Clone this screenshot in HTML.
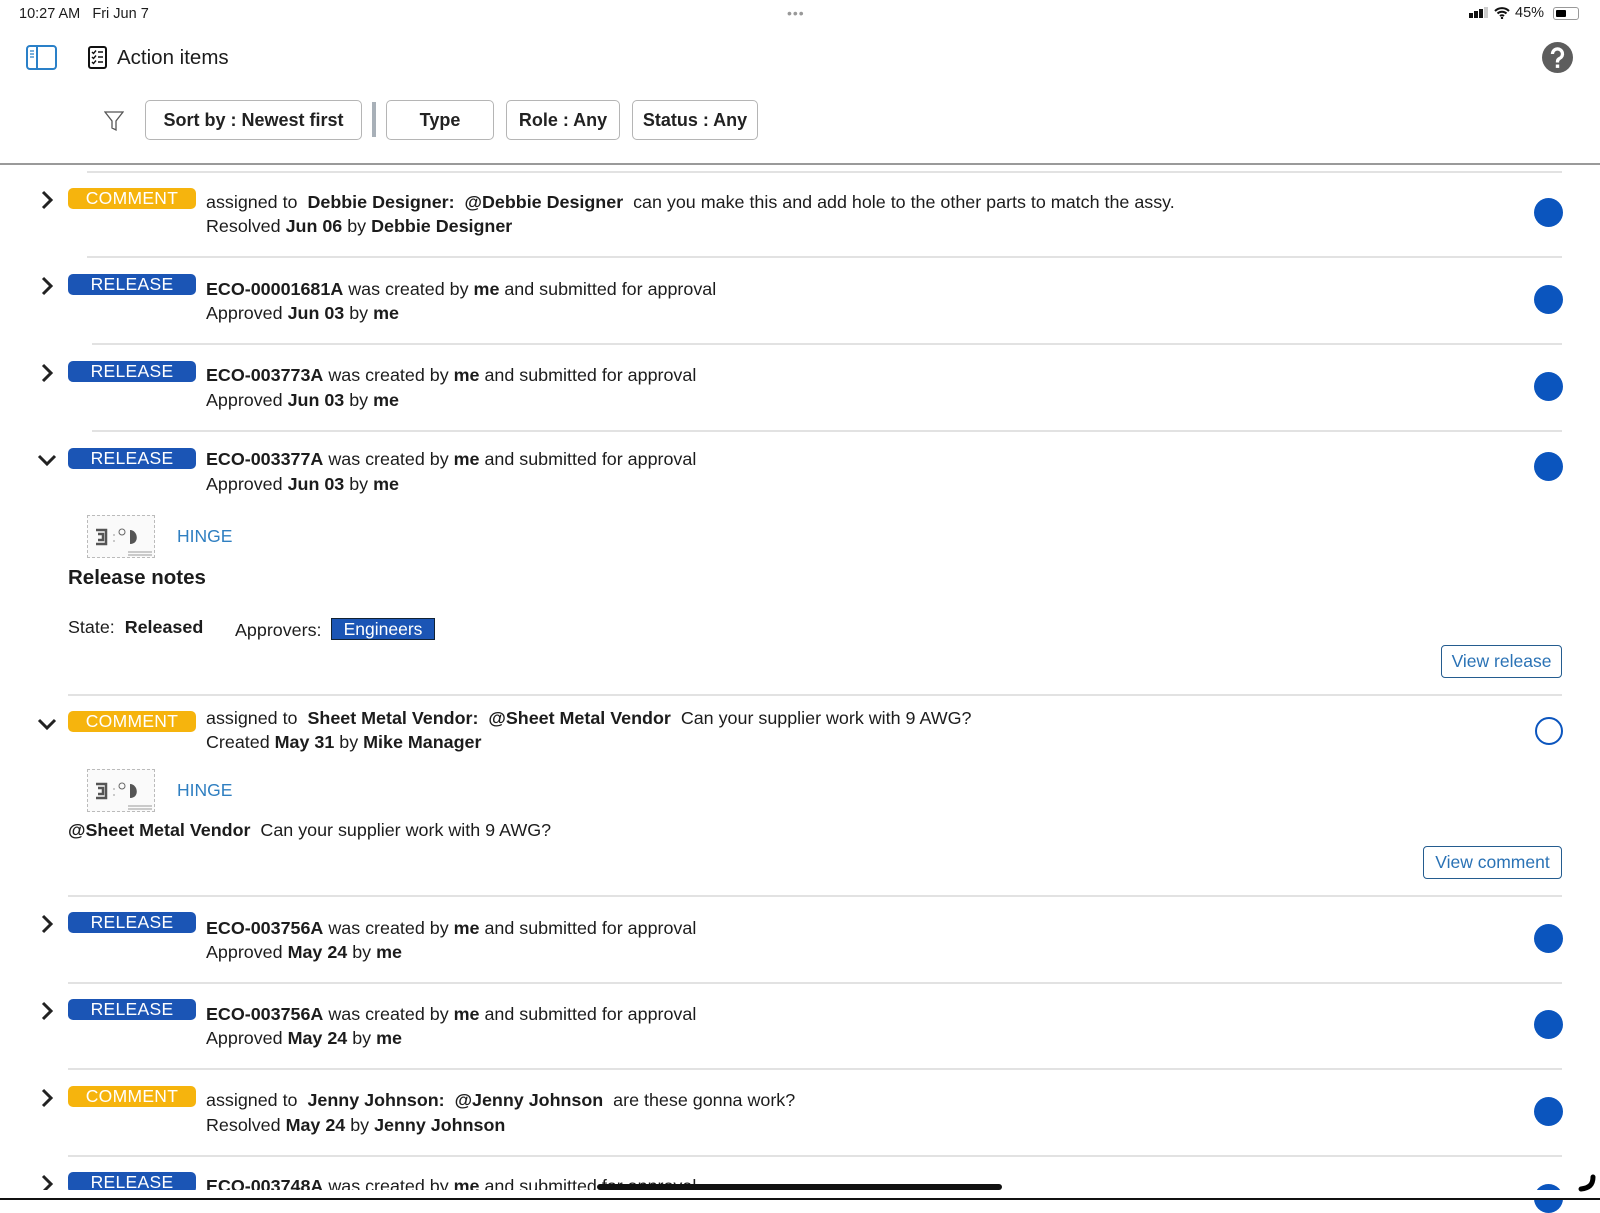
<!DOCTYPE html>
<html><head><meta charset="utf-8"><style>
*{margin:0;padding:0;box-sizing:border-box}
body{width:1600px;height:1200px;overflow:hidden;background:#fff;font-family:"Liberation Sans",sans-serif;color:#1c1c1c;position:relative}
.a{position:absolute;white-space:nowrap}
.t{font-size:17.9px;line-height:20px}
b{font-weight:bold}
.btn{position:absolute;top:100px;height:40px;border:1.5px solid #b5b5b5;border-radius:5px;font-size:18px;font-weight:bold;display:flex;align-items:center;justify-content:center;color:#222}
.sep{position:absolute;height:1.5px;background:#e2e2e2;right:38px}
.badge{position:absolute;left:68px;width:128px;height:21px;border-radius:5px;color:#fff;font-size:17.5px;line-height:21px;text-align:center;letter-spacing:.3px}
.c{background:#f6b40d}.r{background:#1b55b5}
.dot{position:absolute;left:1534px;width:29px;height:29px;border-radius:50%;background:#0b55be}
.chev{position:absolute;left:39px}
.thumb{position:absolute;left:87px;width:68px;height:43px;border:1px dashed #bbb;background:#fafafa}
.link{color:#2f7fc1;font-size:17.5px}
.vb{position:absolute;height:33px;border:1.5px solid #245c8f;border-radius:4px;color:#2a72b5;font-size:17.5px;display:flex;align-items:center;justify-content:center}
</style></head><body>
<div class="a" style="left:19px;top:6px;font-size:14.5px">10:27 AM&nbsp;&nbsp; Fri Jun 7</div>
<div class="a" style="left:787px;top:5px;font-size:14px;color:#999;letter-spacing:1px">•••</div>
<div class="a" style="left:1469px;top:6px;font-size:14.5px">
<span style="display:inline-block;width:4px;height:5px;background:#111;margin-right:1px"></span><span style="display:inline-block;width:4px;height:7px;background:#111;margin-right:1px"></span><span style="display:inline-block;width:4px;height:9px;background:#111;margin-right:1px"></span><span style="display:inline-block;width:4px;height:11px;background:#ccc;margin-right:5px"></span></div>
<svg class="a" style="left:1494px;top:7px" width="16" height="12" viewBox="0 0 16 12"><path d="M1 4a10 10 0 0 1 14 0M3.5 6.5a6.5 6.5 0 0 1 9 0M6 9a3 3 0 0 1 4 0" stroke="#111" stroke-width="2" fill="none"/><circle cx="8" cy="11" r="1.2" fill="#111"/></svg>
<div class="a" style="left:1515px;top:5px;font-size:14.5px">45%</div>
<div class="a" style="left:1553px;top:7px;width:26px;height:13px;border:1.5px solid #999;border-radius:3px"><div style="margin:1.5px;width:10px;height:7px;background:#000;border-radius:1px"></div></div>
<!-- header -->
<svg class="a" style="left:26px;top:45px" width="31" height="25" viewBox="0 0 31 25"><rect x="1" y="1" width="29" height="23" rx="3" fill="none" stroke="#2a80c8" stroke-width="2"/><line x1="11" y1="1" x2="11" y2="24" stroke="#2a80c8" stroke-width="2"/><path d="M4 6h4M4 9h4M4 12h4" stroke="#2a80c8" stroke-width="1.3"/></svg>
<svg class="a" style="left:88px;top:46px" width="19" height="23" viewBox="0 0 19 23"><rect x="1" y="1" width="17" height="21" rx="2" fill="none" stroke="#111" stroke-width="2"/><path d="M4 6l1.5 1.5 2.5-3M4 11l1.5 1.5 2.5-3M4 16l1.5 1.5 2.5-3M10 6h5M10 11h5M10 16h5" stroke="#111" stroke-width="1.4" fill="none"/></svg>
<div class="a" style="left:117px;top:46px;font-size:20.5px">Action items</div>
<svg class="a" style="left:1542px;top:42px" width="31" height="31" viewBox="0 0 31 31"><circle cx="15.5" cy="15.5" r="15.5" fill="#5d5d5d"/><path d="M10.5 12a5 5 0 1 1 7 4.5c-1.3.7-2 1.5-2 3v1" stroke="#fff" stroke-width="3.3" fill="none"/><rect x="13.8" y="22.5" width="3.4" height="3.4" fill="#fff"/></svg>
<svg class="a" style="left:104px;top:111px" width="20" height="21" viewBox="0 0 20 21"><path d="M1 1h18l-7 9v9l-4-2v-7z" fill="none" stroke="#555" stroke-width="1.3"/></svg>
<div class="btn" style="left:145px;width:217px">Sort by : Newest first</div>
<div class="a" style="left:372px;top:102px;width:4px;height:35px;background:#a8b0b8"></div>
<div class="btn" style="left:386px;width:108px">Type</div>
<div class="btn" style="left:506px;width:114px">Role : Any</div>
<div class="btn" style="left:632px;width:126px">Status : Any</div>
<div class="a" style="left:0;top:163px;width:1600px;height:1.5px;background:#9a9a9a"></div>
<div class="sep" style="left:87px;top:171px"></div>

<svg width="0" height="0" style="position:absolute"><defs>
<symbol id="cr" viewBox="0 0 16 22"><path d="M4 3l8 8-8 8" stroke="#222" stroke-width="3" fill="none"/></symbol>
<symbol id="cd" viewBox="0 0 22 16"><path d="M3 4l8 8 8-8" stroke="#222" stroke-width="3" fill="none"/></symbol>
<symbol id="th" viewBox="0 0 68 43"><path d="M8 14h10v14h-10M10 18h5v6h-5" stroke="#555" stroke-width="2.5" fill="none"/><circle cx="34" cy="16" r="3" fill="none" stroke="#666"/><path d="M42 14c8 0 10 14 0 14z" fill="#555"/><path d="M26 18v2M26 24v2M40 36h24M40 39h24" stroke="#999"/></symbol></defs></svg>

<!-- row1 -->
<svg class="chev" style="top:189px" width="16" height="22"><use href="#cr"/></svg>
<div class="badge c" style="top:188px">COMMENT</div>
<div class="a t" style="left:206px;top:192px">assigned to&nbsp; <b>Debbie Designer:&nbsp; @Debbie Designer</b>&nbsp; can you make this and add hole to the other parts to match the assy.</div>
<div class="a t" style="left:206px;top:216px">Resolved <b>Jun 06</b> by <b>Debbie Designer</b></div>
<div class="dot" style="top:198px"></div>
<div class="sep" style="left:87px;top:256px"></div>
<!-- row2 -->
<svg class="chev" style="top:275px" width="16" height="22"><use href="#cr"/></svg>
<div class="badge r" style="top:274px">RELEASE</div>
<div class="a t" style="left:206px;top:279px"><b>ECO-00001681A</b> was created by <b>me</b> and submitted for approval</div>
<div class="a t" style="left:206px;top:303px">Approved <b>Jun 03</b> by <b>me</b></div>
<div class="dot" style="top:285px"></div>
<div class="sep" style="left:92px;top:343px"></div>
<!-- row3 -->
<svg class="chev" style="top:362px" width="16" height="22"><use href="#cr"/></svg>
<div class="badge r" style="top:361px">RELEASE</div>
<div class="a t" style="left:206px;top:365px"><b>ECO-003773A</b> was created by <b>me</b> and submitted for approval</div>
<div class="a t" style="left:206px;top:390px">Approved <b>Jun 03</b> by <b>me</b></div>
<div class="dot" style="top:372px"></div>
<div class="sep" style="left:92px;top:430px"></div>
<!-- row4 -->
<svg class="chev" style="left:36px;top:452px" width="22" height="16"><use href="#cd"/></svg>
<div class="badge r" style="top:448px">RELEASE</div>
<div class="a t" style="left:206px;top:449px"><b>ECO-003377A</b> was created by <b>me</b> and submitted for approval</div>
<div class="a t" style="left:206px;top:474px">Approved <b>Jun 03</b> by <b>me</b></div>
<div class="dot" style="top:452px"></div>
<div class="thumb" style="top:515px"><svg width="68" height="43"><use href="#th"/></svg></div>
<div class="a link" style="left:177px;top:526px">HINGE</div>
<div class="a" style="left:68px;top:566px;font-size:20.5px;font-weight:bold">Release notes</div>
<div class="a t" style="left:68px;top:617px">State:&nbsp; <b>Released</b></div>
<div class="a t" style="left:235px;top:620px">Approvers:</div>
<div class="a" style="left:331px;top:618px;width:104px;height:22px;background:#1b55b5;border:1px solid #123;color:#fff;font-size:17.5px;line-height:20px;text-align:center">Engineers</div>
<div class="vb" style="left:1441px;top:645px;width:121px">View release</div>
<div class="sep" style="left:68px;top:694px"></div>
<!-- row5 -->
<svg class="chev" style="left:36px;top:716px" width="22" height="16"><use href="#cd"/></svg>
<div class="badge c" style="top:711px">COMMENT</div>
<div class="a t" style="left:206px;top:708px">assigned to&nbsp; <b>Sheet Metal Vendor:&nbsp; @Sheet Metal Vendor</b>&nbsp; Can your supplier work with 9 AWG?</div>
<div class="a t" style="left:206px;top:732px">Created <b>May 31</b> by <b>Mike Manager</b></div>
<div class="a" style="left:1535px;top:717px;width:28px;height:28px;border-radius:50%;border:2px solid #0b55be"></div>
<div class="thumb" style="top:769px"><svg width="68" height="43"><use href="#th"/></svg></div>
<div class="a link" style="left:177px;top:780px">HINGE</div>
<div class="a t" style="left:68px;top:820px"><b>@Sheet Metal Vendor</b>&nbsp; Can your supplier work with 9 AWG?</div>
<div class="vb" style="left:1423px;top:846px;width:139px">View comment</div>
<div class="sep" style="left:68px;top:895px"></div>
<!-- row6 -->
<svg class="chev" style="top:913px" width="16" height="22"><use href="#cr"/></svg>
<div class="badge r" style="top:912px">RELEASE</div>
<div class="a t" style="left:206px;top:918px"><b>ECO-003756A</b> was created by <b>me</b> and submitted for approval</div>
<div class="a t" style="left:206px;top:942px">Approved <b>May 24</b> by <b>me</b></div>
<div class="dot" style="top:924px"></div>
<div class="sep" style="left:68px;top:982px"></div>
<!-- row7 -->
<svg class="chev" style="top:1000px" width="16" height="22"><use href="#cr"/></svg>
<div class="badge r" style="top:999px">RELEASE</div>
<div class="a t" style="left:206px;top:1004px"><b>ECO-003756A</b> was created by <b>me</b> and submitted for approval</div>
<div class="a t" style="left:206px;top:1028px">Approved <b>May 24</b> by <b>me</b></div>
<div class="dot" style="top:1010px"></div>
<div class="sep" style="left:68px;top:1068px"></div>
<!-- row8 -->
<svg class="chev" style="top:1087px" width="16" height="22"><use href="#cr"/></svg>
<div class="badge c" style="top:1086px">COMMENT</div>
<div class="a t" style="left:206px;top:1090px">assigned to&nbsp; <b>Jenny Johnson:&nbsp; @Jenny Johnson</b>&nbsp; are these gonna work?</div>
<div class="a t" style="left:206px;top:1115px">Resolved <b>May 24</b> by <b>Jenny Johnson</b></div>
<div class="dot" style="top:1097px"></div>
<div class="sep" style="left:68px;top:1155px"></div>
<!-- row9 -->
<svg class="chev" style="top:1173px" width="16" height="22"><use href="#cr"/></svg>
<div class="badge r" style="top:1172px">RELEASE</div>
<div class="a t" style="left:206px;top:1176px"><b>ECO-003748A</b> was created by <b>me</b> and submitted for approval</div>
<div class="dot" style="top:1184px"></div>
<div class="a" style="left:0;top:1190px;width:1600px;height:10px;background:#fff"></div>
<div class="a" style="left:597px;top:1184px;width:405px;height:6px;border-radius:3px;background:#111"></div>
<svg class="a" style="left:1576px;top:1174px" width="22" height="20" viewBox="0 0 22 20"><path d="M17 3c0 8-4 11-12 12" stroke="#000" stroke-width="5" fill="none" stroke-linecap="round"/></svg>
<div class="a" style="left:0;top:1198px;width:1600px;height:2px;background:#111"></div>
</body></html>
